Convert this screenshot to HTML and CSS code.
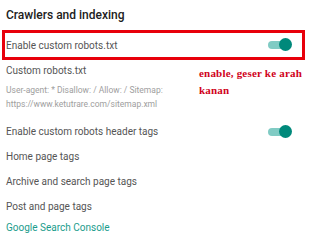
FILE: index.html
```html
<!DOCTYPE html>
<html lang="en">
<head>
    <meta charset="UTF-8">
    <title>Crawlers and indexing</title>
    <link rel="stylesheet" href="styles.css">
</head>
<body>
    <section class="settings">
        <h2 class="settings-title">Crawlers and indexing</h2>

        <div class="row row-marked">
            <span class="row-label">Enable custom robots.txt</span>
            <span class="switch"><span class="switch-thumb"></span></span>
        </div>

        <div class="field">
            <div class="field-label">Custom robots.txt</div>
            <div class="field-help">User-agent: * Disallow: / Allow: / Sitemap:<br>https://www.ketutrare.com/sitemap.xml</div>
            <p class="note">enable, geser ke arah kanan</p>
        </div>

        <div class="row">
            <span class="row-label">Enable custom robots header tags</span>
            <span class="switch"><span class="switch-thumb"></span></span>
        </div>

        <div class="row"><span class="row-label">Home page tags</span></div>
        <div class="row"><span class="row-label">Archive and search page tags</span></div>
        <div class="row"><span class="row-label">Post and page tags</span></div>

        <a class="link" href="">Google Search Console</a>
    </section>
</body>
</html>
```

FILE: styles.css
```css
body {
    margin: 0;
    background: #fff;
    font-family: Roboto, 'Noto Sans', Arial, sans-serif;
    color: #5f6368;
}

.settings {
    width: 303px;
    padding: 0 0 0 2px;
}

.settings-title {
    margin: 0;
    padding: 6px 0 0 4px;
    height: 30px;
    font-size: 12px;
    font-weight: 500;
    color: #212121;
    line-height: 18px;
    box-sizing: border-box;
}

.row {
    display: flex;
    align-items: center;
    justify-content: space-between;
    height: 25px;
    padding: 0 14px 0 1px;
    border-left: 3px solid transparent;
    border-right: 3px solid transparent;
    font-size: 10px;
}

.row-marked {
    height: 24px;
    border: 3px solid #e8000b;
}

.row-label {
    color: #555;
}

.switch {
    position: relative;
    width: 20px;
    height: 8px;
    border-radius: 4px;
    background: #80cbc4;
}

.switch-thumb {
    position: absolute;
    right: -4px;
    top: -3px;
    width: 13px;
    height: 13px;
    border-radius: 50%;
    background: #00897b;
}

.field {
    position: relative;
    height: 56px;
    padding: 3px 0 0 4px;
}

.field-label {
    font-size: 10px;
    color: #555;
    line-height: 16px;
}

.field-help {
    margin-top: 4px;
    font-size: 8.5px;
    line-height: 14px;
    color: #9e9e9e;
}

.note {
    position: absolute;
    left: 197px;
    top: 5px;
    width: 112px;
    margin: 0;
    font-family: 'Liberation Serif', 'DejaVu Serif', serif;
    font-weight: bold;
    font-size: 11px;
    letter-spacing: 0.2px;
    line-height: 17px;
    color: #d0021b;
}

.link {
    display: block;
    padding: 2px 0 0 4px;
    font-size: 10px;
    line-height: 14px;
    color: #1a9c8c;
    text-decoration: none;
}
```
